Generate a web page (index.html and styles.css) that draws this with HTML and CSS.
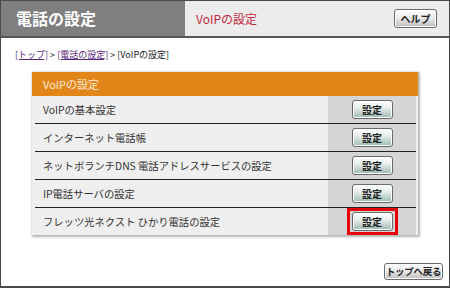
FILE: index.html
```html
<!DOCTYPE html>
<html lang="ja">
<head>
  <meta charset="UTF-8">
  <title>VoIPの設定</title>
  <link rel="stylesheet" href="styles.css">
</head>
<body>
  <div class="frame">
    <!-- Header bar -->
    <div class="header">
      <div class="header-title">電話の設定</div>
      <div class="header-sub">VoIPの設定</div>
      <button class="btn btn-gray help">ヘルプ</button>
    </div>

    <div class="content">
      <div class="crumbs">
        <a href="#">[トップ]</a> &gt; <a href="#">[電話の設定]</a> &gt; [VoIPの設定]
      </div>

      <!-- Settings panel -->
      <div class="panel">
        <div class="panel-head">VoIPの設定</div>
        <div class="row">
          <div class="label">VoIPの基本設定</div>
          <div class="cell"><button class="btn btn-teal">設定</button></div>
        </div>
        <div class="row">
          <div class="label">インターネット電話帳</div>
          <div class="cell"><button class="btn btn-teal">設定</button></div>
        </div>
        <div class="row">
          <div class="label">ネットボランチDNS 電話アドレスサービスの設定</div>
          <div class="cell"><button class="btn btn-teal">設定</button></div>
        </div>
        <div class="row">
          <div class="label">IP電話サーバの設定</div>
          <div class="cell"><button class="btn btn-teal">設定</button></div>
        </div>
        <div class="row">
          <div class="label">フレッツ光ネクスト ひかり電話の設定</div>
          <div class="cell">
            <span class="mark"><button class="btn btn-teal">設定</button></span>
          </div>
        </div>
      </div>

      <div class="footer">
        <button class="btn btn-gray back">トップへ戻る</button>
      </div>
    </div>
  </div>
</body>
</html>
```

FILE: styles.css
```css
body {
  margin: 0;
  font-family: "Noto Sans CJK JP", "Liberation Sans", sans-serif;
  color: #222;
}

/* Outer window */
.frame {
  width: 450px;
  height: 288px;
  box-sizing: border-box;
  border: 1px solid #4a4a4a;
  border-bottom-width: 2px;
  background: #fff;
  display: flex;
  flex-direction: column;
}

/* Header */
.header {
  display: flex;
  align-items: center;
  height: 35px;
  background: #ececec;
  border-bottom: 2px solid #555;
}

.header-title {
  width: 184px;
  height: 100%;
  box-sizing: border-box;
  padding-left: 15px;
  background: #7f7f7f;
  color: #fff;
  font-size: 16px;
  font-weight: bold;
  line-height: 35px;
}

.header-sub {
  flex: 1;
  padding-left: 11px;
  color: #c42a3c;
  font-size: 12px;
}

.help {
  width: 43px;
  height: 19px;
  margin-right: 12px;
}

/* Buttons */
.btn {
  padding: 0;
  border: 1px solid #6a6a6a;
  border-radius: 3px;
  font-family: inherit;
  font-size: 10px;
  font-weight: bold;
  line-height: 1;
  color: #222;
  white-space: nowrap;
  box-shadow: inset 0 0 0 1px #fff;
  cursor: pointer;
}

.btn-gray {
  background: linear-gradient(#ffffff, #e8e8e8 50%, #bdbdbd);
}

.btn-teal {
  width: 41px;
  height: 19px;
  background: linear-gradient(#ffffff, #e6eeec 40%, #9dbab3);
}

/* Content */
.content {
  flex: 1;
  display: flex;
  flex-direction: column;
  padding: 0 0 0 14px;
}

.crumbs {
  margin-top: 10px;
  font-size: 9px;
  line-height: 14px;
  color: #222;
}

.crumbs a {
  color: #5a2a7a;
}

.panel {
  margin: 10px 0 0 17px;
  width: 386px;
  background: #efefef;
  box-shadow: 1px 1px 2px 1px #b5b5b5;
}

.panel-head {
  height: 24px;
  padding-left: 11px;
  background: #e2861a;
  color: #fdebd2;
  font-size: 11px;
  line-height: 24px;
}

.row {
  display: flex;
  height: 27px;
  margin: 0 2px 0 3px;
}

.row + .row {
  border-top: 1px solid #222;
}

.label {
  flex: 1;
  padding-left: 8px;
  font-size: 10.3px;
  line-height: 27px;
  color: #333;
}

.cell {
  width: 88px;
  background: #d5d5d5;
  display: flex;
  align-items: center;
  justify-content: center;
}

/* Red highlight round the target button */
.mark {
  display: flex;
  padding: 1px 2px;
  border: 3px solid #e8000b;
}

.footer {
  flex: 1;
  display: flex;
  align-items: flex-end;
  justify-content: flex-end;
  padding: 0 6px 6px 0;
}

.back {
  width: 59px;
  height: 17px;
  font-size: 9.5px;
  letter-spacing: -0.3px;
}
```
